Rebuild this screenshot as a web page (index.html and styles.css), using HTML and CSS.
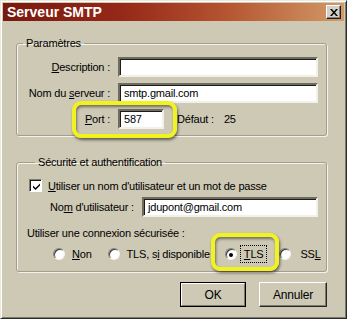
FILE: index.html
```html
<!DOCTYPE html>
<html lang="fr">
<head>
<meta charset="utf-8">
<title>Serveur SMTP</title>
<link rel="stylesheet" href="styles.css">
</head>
<body>
<div class="window">
  <div class="titlebar">
    <span class="title">Serveur SMTP</span>
    <span class="close">
      <svg width="8" height="7" viewBox="0 0 8 7"><path d="M0 0h2l2 2.5L6 0h2L5 3.5L8 7H6L4 4.5L2 7H0l3-3.5z" fill="#000"/></svg>
    </span>
  </div>
  <div class="body">
    <fieldset class="group group-params">
      <legend>Paramètres</legend>
      <div class="form-grid">
        <label class="lbl"><u>D</u>escription :</label>
        <span class="field field-wide"></span>
        <label class="lbl">Nom du <u>s</u>erveur :</label>
        <span class="field field-wide">smtp.gmail.com</span>
        <label class="lbl"><u>P</u>ort :</label>
        <div class="port-row">
          <span class="field field-port">587</span>
          <span class="default">Défaut :</span>
          <span class="default-val">25</span>
        </div>
      </div>
    </fieldset>

    <fieldset class="group group-sec">
      <legend>Sécurité et authentification</legend>
      <div class="check-row">
        <span class="checkbox">
          <svg width="9" height="9" viewBox="0 0 9 9"><path d="M1 3.5 L3.5 6 L8 1.5 V3.5 L3.5 8 L1 5.5Z" fill="#000"/></svg>
        </span>
        <span><u>U</u>tiliser un nom d'utilisateur et un mot de passe</span>
      </div>
      <div class="user-row">
        <label class="lbl-user">No<u>m</u> d'utilisateur :</label>
        <span class="field field-user">jdupont@gmail.com</span>
      </div>
      <div class="conn-label">Utiliser une connexion sécurisée :</div>
      <div class="radio-row">
        <span class="radio-item r-non"><span class="radio"></span><span><u>N</u>on</span></span>
        <span class="radio-item r-tlsopt"><span class="radio"></span><span>TLS, s<u>i</u> disponible</span></span>
        <span class="radio-item r-tls"><span class="radio checked"></span><span class="focus"><u>T</u>LS</span></span>
        <span class="radio-item r-ssl"><span class="radio"></span><span>SS<u>L</u></span></span>
      </div>
    </fieldset>

    <div class="buttons">
      <span class="btn btn-default"><span class="btn-inner">OK</span></span>
      <span class="btn"><span class="btn-inner">Annuler</span></span>
    </div>
  </div>
  <span class="highlight hl-port"></span>
  <span class="highlight hl-tls"></span>
</div>
</body>
</html>
```
FILE: styles.css
```css
* { box-sizing: border-box; }
html, body { margin: 0; padding: 0; }
body {
  background: #cdc9b4;
  font-family: "Liberation Sans", Arial, sans-serif;
  font-size: 11px;
  letter-spacing: -0.2px;
  color: #000;
}
.window {
  position: relative;
  width: 347px;
  height: 319px;
  background: #cdc9b4;
  border: 1px solid;
  border-color: #ebe8dc #2a2a26 #2a2a26 #ebe8dc;
  box-shadow: inset 1px 1px 0 #ffffff, inset -1px -1px 0 #7e7b6e;
  padding: 2px;
  overflow: hidden;
}
.titlebar {
  height: 18px;
  display: flex;
  align-items: center;
  justify-content: space-between;
  padding: 0 3px 0 4px;
  background: linear-gradient(to right, #7a180e 0%, #962818 35%, #b45430 65%, #d39a68 100%);
}
.title {
  color: #fff;
  font-weight: bold;
  font-size: 14px;
  letter-spacing: 0;
}
.close {
  width: 15px;
  height: 14px;
  background: #d4d0c8;
  border: 1px solid;
  border-color: #fff #202020 #202020 #fff;
  box-shadow: inset -1px -1px 0 #808080;
  display: flex;
  align-items: center;
  justify-content: center;
}
.close svg { display: block; }
.body {
  padding: 0 14px 0 13px;
}
.group {
  margin: 0;
  padding: 0;
  border: 1px solid #a19e8e;
  border-radius: 3px;
  box-shadow: 1px 1px 0 #f4f2ea, inset 1px 1px 0 #f4f2ea;
  width: 311px;
}
.group legend {
  padding: 0 3px;
  margin-left: 6px;
  line-height: 13px;
}
.group-params {
  margin-top: 16px;
  padding: 7px 0 6px 0;
}
.form-grid {
  display: grid;
  grid-template-columns: 93px 200px;
  column-gap: 8px;
  row-gap: 6px;
  align-items: center;
}
.lbl { text-align: right; }
.field {
  display: block;
  height: 20px;
  line-height: 16px;
  padding: 0 4px;
  background: #fff;
  border: 2px solid;
  border-color: #6e6b60 #f2f0e8 #f2f0e8 #6e6b60;
  box-shadow: inset 1px 1px 0 #1c1c1a;
  white-space: nowrap;
  overflow: hidden;
}
.port-row {
  display: flex;
  align-items: center;
}
.field-port { width: 46px; }
.default { margin-left: 13px; }
.default-val { margin-left: 10px; }

.group-sec {
  margin-top: 20px;
  padding: 10px 0 8px 12px;
}
.check-row {
  display: flex;
  align-items: center;
  gap: 6px;
  height: 13px;
}
.checkbox {
  width: 13px;
  height: 13px;
  background: #fff;
  border: 1px solid;
  border-color: #7e7b6e #fff #fff #7e7b6e;
  box-shadow: inset 1px 1px 0 #1c1c1a;
  display: flex;
  align-items: center;
  justify-content: center;
  padding: 1px 0 0 1px;
}
.checkbox svg { display: block; }
.user-row {
  display: flex;
  align-items: center;
  margin-top: 5px;
  margin-left: 21px;
}
.lbl-user { width: 92px; }
.field-user { width: 176px; }
.conn-label {
  margin-top: 10px;
  margin-left: -2px;
  line-height: 13px;
}
.radio-row {
  position: relative;
  display: flex;
  align-items: center;
  height: 18px;
  margin-top: 5px;
}
.radio-item {
  display: flex;
  align-items: center;
  gap: 7px;
}
.r-non { margin-left: 24px; }
.r-tlsopt { margin-left: 16px; }
.r-tls { margin-left: 15px; gap: 4px; }
.r-ssl { margin-left: 13px; gap: 9px; }
.radio {
  width: 12px;
  height: 12px;
  border-radius: 50%;
  background: #fff;
  border: 1px solid;
  border-color: #86837a #f4f2ea #f4f2ea #86837a;
  box-shadow: inset 1px 1px 0 #3a3a36;
  display: flex;
  align-items: center;
  justify-content: center;
}
.radio.checked::after {
  content: "";
  width: 4px;
  height: 4px;
  border-radius: 50%;
  background: #000;
  margin: 1px 0 0 1px;
}
.focus {
  outline: 1px dotted #000;
  padding: 2px 3px;
}
.buttons {
  display: flex;
  justify-content: flex-end;
  gap: 13px;
  margin-top: 10px;
  padding-right: 3px;
}
.btn {
  width: 68px;
  height: 25px;
  border: 1px solid;
  border-color: #fff #262622 #262622 #fff;
  box-shadow: inset -1px -1px 0 #7e7b6e;
  display: flex;
}
.btn-default {
  width: 66px;
  border: 1px solid #000;
}
.btn-default .btn-inner {
  border: 1px solid;
  border-color: #fff #7e7b6e #7e7b6e #fff;
}
.btn-inner {
  flex: 1;
  display: flex;
  align-items: center;
  justify-content: center;
  font-size: 12px;
}
.highlight {
  position: absolute;
  border: 4px solid #f2f21e;
  border-radius: 9px;
  box-shadow: 1px 2px 3px rgba(0,0,0,0.55), inset 1px 2px 3px rgba(0,0,0,0.45);
  pointer-events: none;
}
.hl-port {
  left: 71px;
  top: 100px;
  width: 105px;
  height: 37px;
}
.hl-tls {
  left: 210px;
  top: 232px;
  width: 68px;
  height: 38px;
}
```
